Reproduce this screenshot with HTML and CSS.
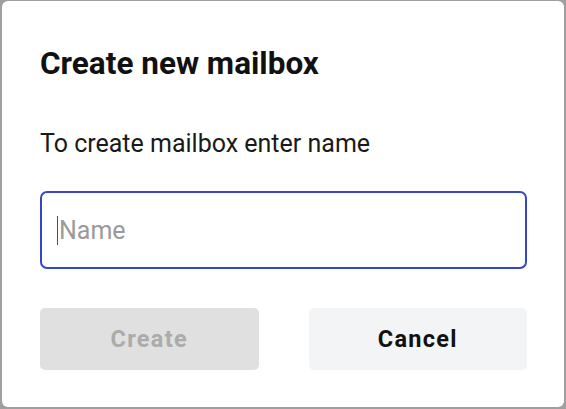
FILE: index.html
```html
<html>
<head>
    <meta charset="UTF-8">
    <meta name="viewport" content="width=device-width, initial-scale=1.0">
    <title>Create new mailbox</title>
    <link rel="stylesheet" href="styles.css">
</head>

<body>
<div class="dialog">
    <div class="dialog_title">Create new mailbox</div>
    <div class="dialog_text">To create mailbox enter name</div>
    <div class="dialog_input">
        <span class="caret"></span><span class="placeholder">Name</span>
    </div>
    <div class="dialog_buttons">
        <div class="btn btn_disabled">Create</div>
        <div class="btn btn_cancel">Cancel</div>
    </div>
</div>
</body>
</html>
```

FILE: styles.css
```css
* {
    margin: 0;
    padding: 0;
    box-sizing: border-box;
}

body {
    background: #9f9f9f;
    font-family: Roboto, "Liberation Sans", sans-serif;
    padding: 1px 2px 2px 2px;
    width: 566px;
    height: 409px;
}

.dialog {
    height: 406px;
    background: white;
    border-radius: 6px;
    padding: 43px 37px 0 38px;
    display: flex;
    flex-direction: column;
}

.dialog_title {
    font-size: 31.5px;
    line-height: 40px;
    font-weight: 700;
    color: #111;
}

.dialog_text {
    font-size: 25px;
    line-height: 32px;
    color: #1a1a1a;
    margin-top: 44px;
}

.dialog_input {
    margin-top: 31px;
    height: 78px;
    border: 2px solid #3447c9;
    border-radius: 7px;
    display: flex;
    align-items: center;
    padding-left: 15px;
}

.caret {
    width: 1px;
    height: 29px;
    background: #3447c9;
    margin-right: 1px;
}

.placeholder {
    font-size: 25px;
    color: #9a9a9a;
}

.dialog_buttons {
    margin-top: 39px;
    display: grid;
    grid-template-columns: 1fr 1fr;
    gap: 50px;
}

.btn {
    height: 62px;
    border-radius: 5px;
    display: flex;
    align-items: center;
    justify-content: center;
    font-size: 23.5px;
    font-weight: 700;
    letter-spacing: 1.3px;
}

.btn_disabled {
    background: #e0e0e0;
    color: #ababab;
}

.btn_cancel {
    background: #f3f4f6;
    color: #111;
}
```
